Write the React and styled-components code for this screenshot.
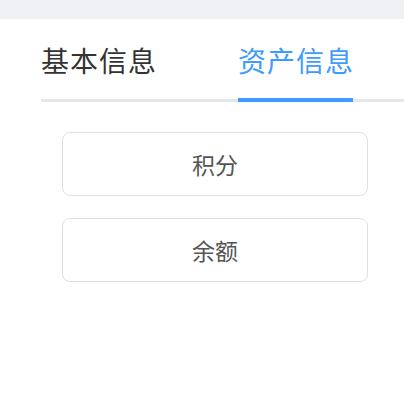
import React, { useState } from "react";
import styled, { createGlobalStyle } from "styled-components";

const GlobalStyle = createGlobalStyle`
  html, body {
    margin: 0;
    padding: 0;
    background: #fff;
  }
  body {
    font-family: "Noto Sans CJK SC", "Noto Sans", sans-serif;
  }
`;

// styled-components
const Page = styled.div`
  width: 404px;
  height: 416px;
  background: #fff;
  overflow: hidden;
`;

const TopStrip = styled.div`
  height: 19px;
  background: #eef0f3;
`;

const TabBar = styled.div`
  display: flex;
  gap: 82px;
  margin-left: 41px;
  padding-top: 27px;
  border-bottom: 3px solid #e4e6ec;
`;

const Tab = styled.div`
  width: 115px;
  font-size: 28px;
  line-height: 28px;
  letter-spacing: 1px;
  padding-bottom: 24px;
  margin-bottom: -3px;
  color: ${props => (props.$active ? "#3f9bff" : "#333")};
  border-bottom: 4px solid ${props => (props.$active ? "#3f9bff" : "transparent")};
  white-space: nowrap;
  cursor: pointer;
`;

const List = styled.div`
  display: flex;
  flex-direction: column;
  gap: 22px;
  width: 306px;
  margin: 30px 0 0 62px;
`;

const Item = styled.div`
  box-sizing: border-box;
  height: 64px;
  display: flex;
  align-items: center;
  justify-content: center;
  border: 1.5px solid #dcdfe6;
  border-radius: 8px;
  font-size: 23px;
  color: #555;
`;

const tabs = ["基本信息", "资产信息"];
const items = ["积分", "余额"];

export default function App() {
  const [active, setActive] = useState(1);

  return (
    <Page>
      <GlobalStyle />
      <TopStrip />
      <TabBar>
        {tabs.map((t, i) => (
          <Tab key={t} $active={i === active} onClick={() => setActive(i)}>
            {t}
          </Tab>
        ))}
      </TabBar>
      <List>
        {items.map(it => (
          <Item key={it}>{it}</Item>
        ))}
      </List>
    </Page>
  );
}
